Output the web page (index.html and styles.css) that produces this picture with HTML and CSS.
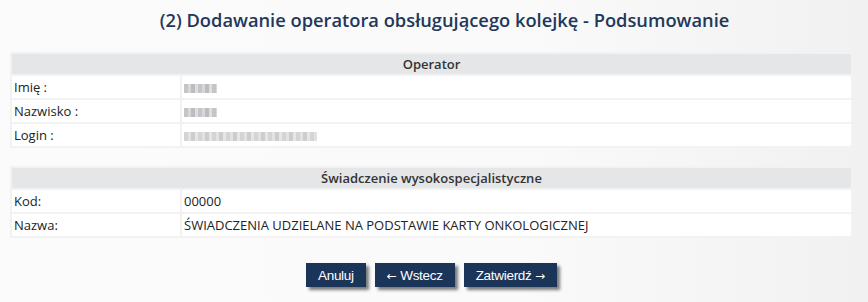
FILE: index.html
```html
<!DOCTYPE html>
<html lang="pl">
  <head>
    <meta charset="UTF-8" />
    <title>Podsumowanie</title>
    <link rel="stylesheet" href="styles.css">
  </head>
  <body>
    <div class="container">
      <h1 class="title">(2) Dodawanie operatora obsługującego kolejkę - Podsumowanie</h1>

      <table class="summary">
        <tr>
          <th colspan="2">Operator</th>
        </tr>
        <tr>
          <td class="label">Imię :</td>
          <td><span class="masked short"></span></td>
        </tr>
        <tr>
          <td class="label">Nazwisko :</td>
          <td><span class="masked short"></span></td>
        </tr>
        <tr>
          <td class="label">Login :</td>
          <td><span class="masked long"></span></td>
        </tr>
      </table>

      <table class="summary">
        <tr>
          <th colspan="2">Świadczenie wysokospecjalistyczne</th>
        </tr>
        <tr>
          <td class="label">Kod:</td>
          <td>00000</td>
        </tr>
        <tr>
          <td class="label">Nazwa:</td>
          <td>ŚWIADCZENIA UDZIELANE NA PODSTAWIE KARTY ONKOLOGICZNEJ</td>
        </tr>
      </table>

      <div class="actions">
        <button class="btn">Anuluj</button>
        <button class="btn"><span class="arrow">&larr;</span> Wstecz</button>
        <button class="btn">Zatwierdź <span class="arrow">&rarr;</span></button>
      </div>
    </div>
  </body>
</html>
```

FILE: styles.css
```css
html, body {
  height: 100%;
}
body {
  margin: 0;
  font-family: "Open Sans", "Liberation Sans", sans-serif;
  background: linear-gradient(90deg, #fbfbfb 0%, #fafafa 60%, #f1f1f1 100%);
  color: #222;
}
.container {
  padding: 0 15px 0 10px;
}
.title {
  margin: 0;
  padding: 9px 0 0 26px;
  height: 52px;
  box-sizing: border-box;
  text-align: center;
  font-size: 18.3px;
  font-weight: 600;
  line-height: 22px;
  color: #22385a;
}
table.summary {
  width: 100%;
  border-spacing: 2px;
  background: #f2f2f2;
  margin-bottom: 18px;
  font-size: 13px;
}
table.summary th {
  height: 20px;
  padding: 0;
  background: #e5e6e7;
  color: #333;
  font-weight: 600;
  text-align: center;
  line-height: 20px;
}
table.summary td {
  height: 22px;
  padding: 0 2px;
  background: #fff;
  line-height: 22px;
  text-align: left;
}
table.summary td.label {
  width: 164px;
}
.masked {
  display: inline-block;
  height: 9px;
  vertical-align: middle;
  background: repeating-linear-gradient(90deg, #b8b6bc 0 4px, #cfcfd2 4px 7px, #a9adb0 7px 11px, #d8d6d8 11px 14px);
  filter: blur(0.6px);
  opacity: 0.8;
}
.masked.short {
  width: 33px;
}
.masked.long {
  width: 133px;
  opacity: 0.6;
}
.actions {
  display: flex;
  justify-content: center;
  gap: 9px;
  margin-top: 25px;
}
.btn {
  height: 24px;
  padding: 0 12px;
  border: none;
  background: #1b3559;
  color: #fff;
  font-family: "Liberation Sans", Arial, sans-serif;
  font-size: 13.5px;
  letter-spacing: -0.3px;
  box-shadow: 3px 3px 3px #7a7a7a;
  cursor: pointer;
}
.arrow {
  font-family: "DejaVu Sans", sans-serif;
  font-size: 12px;
  letter-spacing: 0;
}
```
